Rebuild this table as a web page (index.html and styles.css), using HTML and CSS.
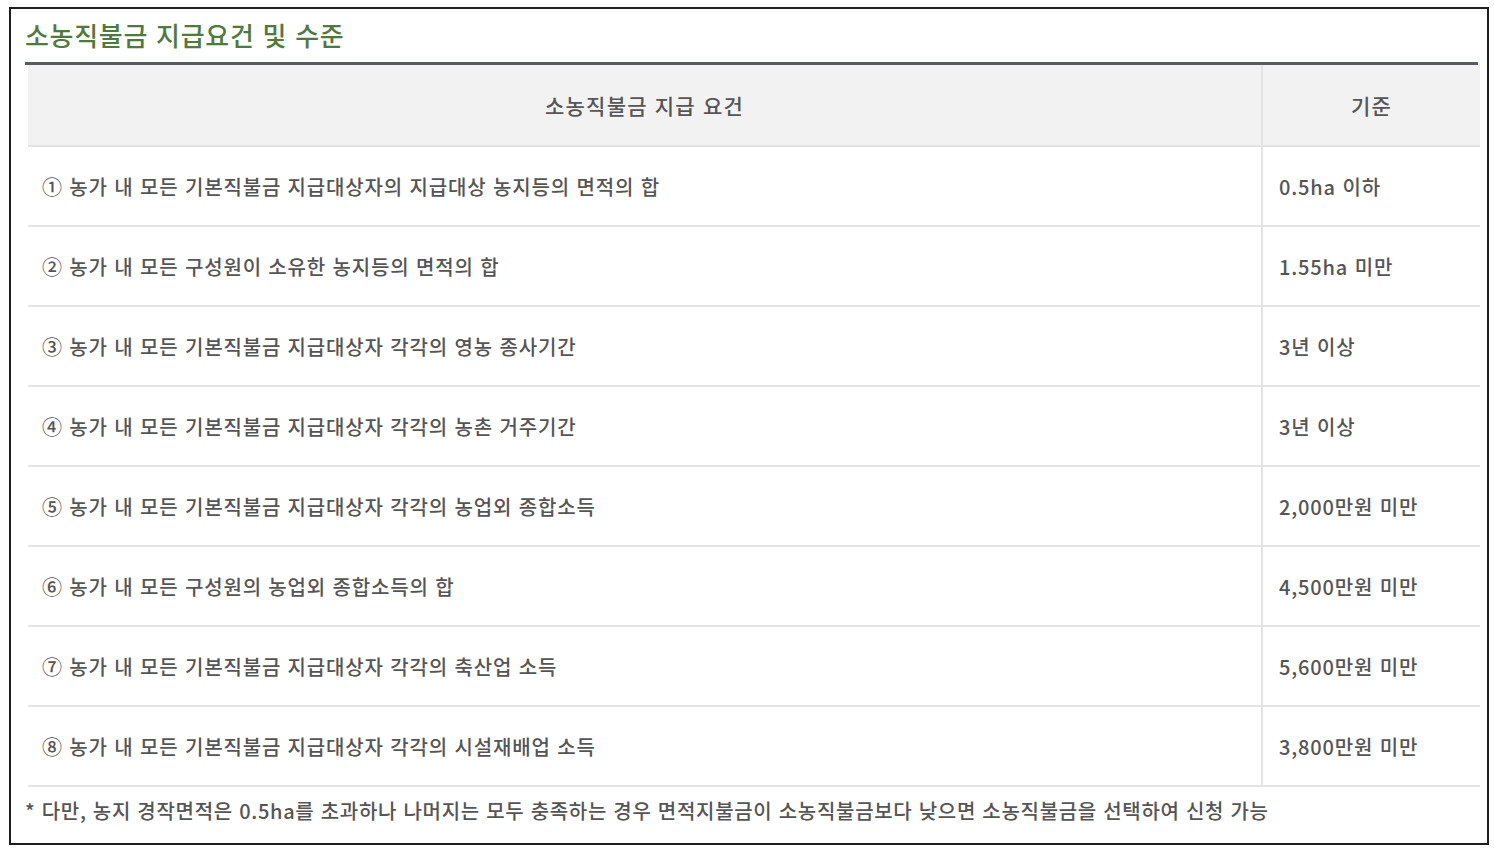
FILE: index.html
```html
<!DOCTYPE html>
<html lang="ko">
<head>
<meta charset="utf-8">
<link rel="stylesheet" href="styles.css">
</head>
<body>
<div class="frame">
  <h2 class="title">소농직불금 지급요건 및 수준</h2>
  <div class="rule"></div>
  <table class="req">
    <thead>
      <tr><th class="c1">소농직불금 지급 요건</th><th class="c2">기준</th></tr>
    </thead>
    <tbody>
      <tr><td class="c1">① 농가 내 모든 기본직불금 지급대상자의 지급대상 농지등의 면적의 합</td><td class="c2">0.5ha 이하</td></tr>
      <tr><td class="c1">② 농가 내 모든 구성원이 소유한 농지등의 면적의 합</td><td class="c2">1.55ha 미만</td></tr>
      <tr><td class="c1">③ 농가 내 모든 기본직불금 지급대상자 각각의 영농 종사기간</td><td class="c2">3년 이상</td></tr>
      <tr><td class="c1">④ 농가 내 모든 기본직불금 지급대상자 각각의 농촌 거주기간</td><td class="c2">3년 이상</td></tr>
      <tr><td class="c1">⑤ 농가 내 모든 기본직불금 지급대상자 각각의 농업외 종합소득</td><td class="c2">2,000만원 미만</td></tr>
      <tr><td class="c1">⑥ 농가 내 모든 구성원의 농업외 종합소득의 합</td><td class="c2">4,500만원 미만</td></tr>
      <tr><td class="c1">⑦ 농가 내 모든 기본직불금 지급대상자 각각의 축산업 소득</td><td class="c2">5,600만원 미만</td></tr>
      <tr><td class="c1">⑧ 농가 내 모든 기본직불금 지급대상자 각각의 시설재배업 소득</td><td class="c2">3,800만원 미만</td></tr>
    </tbody>
  </table>
  <p class="note">* 다만, 농지 경작면적은 0.5ha를 초과하나 나머지는 모두 충족하는 경우 면적지불금이 소농직불금보다 낮으면 소농직불금을 선택하여 신청 가능</p>
</div>
</body>
</html>
```
FILE: styles.css
```css
html, body {
  margin: 0;
  padding: 0;
  background: #ffffff;
}
body {
  font-family: "Noto Sans CJK KR", "Noto Sans", sans-serif;
  color: #555555;
}
.frame {
  box-sizing: border-box;
  margin: 7px 0 0 9px;
  width: 1480px;
  height: 838px;
  border: 2px solid #1e1e1e;
  padding: 0 0 0 14px;
}
.title {
  margin: 0;
  padding-top: 9px;
  height: 44px;
  font-size: 26px;
  line-height: 34px;
  font-weight: 500;
  color: #4f7a3e;
  letter-spacing: 0.7px;
}
.rule {
  width: 1453px;
  height: 3px;
  background: #575b63;
}
.req {
  margin-left: 3px;
  width: 1450px;
  border-collapse: collapse;
  table-layout: fixed;
}
.req th, .req td {
  font-size: 20px;
  font-weight: 500;
  color: #555555;
  border-bottom: 2px solid #e4e4e4;
  padding: 0;
  letter-spacing: 0.85px;
}
.req .c1 { width: 1233px; }
.req .c2 { width: 217px; border-left: 2px solid #e4e4e4; }
.req th {
  background: #f2f2f2;
  height: 80px;
  text-align: center;
  font-size: 21px;
  letter-spacing: 1.2px;
}
.req td {
  height: 78px;
  text-align: left;
}
.req td.c1 { padding-left: 14px; }
.req td.c2 { padding-left: 16px; }
.note {
  margin: 9px 0 0 0;
  font-size: 20px;
  font-weight: 500;
  color: #555555;
  letter-spacing: 0.7px;
}
```
